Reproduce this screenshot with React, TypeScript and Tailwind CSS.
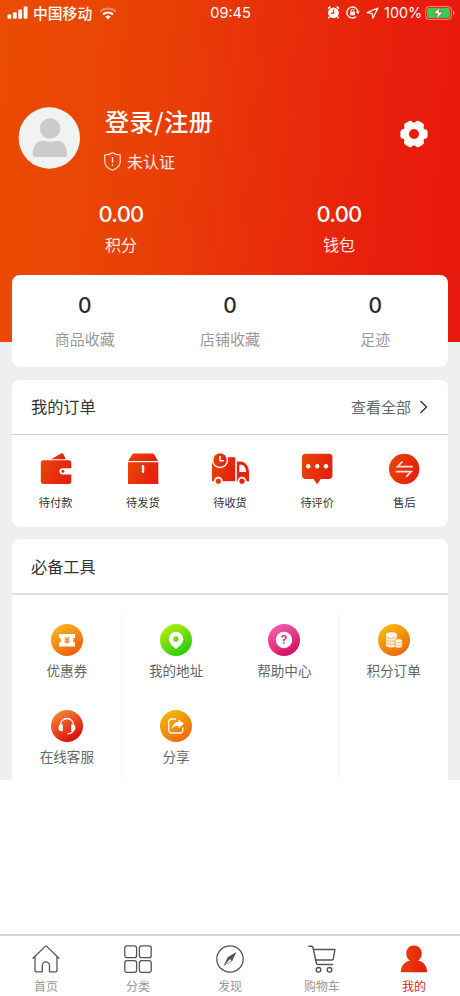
import React from "react";

type IconProps = { className?: string };

// shared fills for the drawn icons
function Gradients() {
  return (
    <svg className="absolute h-0 w-0" aria-hidden="true">
      <defs>
        <linearGradient id="red" x1="0" y1="0" x2="1" y2="0.3">
          <stop offset="0" stopColor="#ea4607" />
          <stop offset="1" stopColor="#e6200f" />
        </linearGradient>
      </defs>
    </svg>
  );
}

function StatusBar() {
  return (
    <div className="flex h-[25px] items-center justify-between pl-[7px] pr-[6px] text-white">
      <div className="flex w-[190px] items-center">
        <svg width="21" height="13" viewBox="0 0 21 13" fill="#fff">
          <rect x="0.5" y="8.5" width="3.8" height="4.2" rx="1" />
          <rect x="5.9" y="6.3" width="3.8" height="6.4" rx="1" />
          <rect x="11.3" y="3.6" width="3.8" height="9.1" rx="1" />
          <rect x="16.7" y="0.5" width="3.8" height="12.2" rx="1" />
        </svg>
        <span className="ml-[5px] font-['Noto_Sans_CJK_SC',sans-serif] text-[14.8px] leading-[24px] font-medium">中国移动</span>
        <svg className="ml-[7px] mt-px" width="18" height="13" viewBox="0 0 18 13" fill="none" stroke="#fff">
          <path d="M1.4 4.6a11 11 0 0 1 15.2 0" strokeWidth="2" opacity="0.35" />
          <path d="M4 7.5a7.2 7.2 0 0 1 10 0" strokeWidth="2.1" />
          <path d="M9 12.6 6.2 9.8a4 4 0 0 1 5.6 0Z" fill="#fff" stroke="none" />
        </svg>
      </div>
      <span className="font-['Inter',sans-serif] text-[14.5px] leading-[24px]">09:45</span>
      <div className="flex w-[190px] items-center justify-end">
        <svg width="13" height="13" viewBox="0 0 12 13">
          <path d="M0.4 2.6 3 .5M9 .5l2.6 2.1" stroke="#fff" strokeWidth="1.5" />
          <circle cx="6" cy="6.8" r="5.4" fill="#fff" />
          <path d="M2.2 10.5.9 12.3M9.8 10.5l1.3 1.8" stroke="#fff" strokeWidth="1.4" />
          <path d="M6.2 3.6v3.5H3.4" fill="none" stroke="#e8280c" strokeWidth="1.1" />
        </svg>
        <svg className="ml-[6px]" width="14" height="13" viewBox="0 0 14 13" fill="none" stroke="#fff">
          <path d="M11.9 6.2a5.5 5.5 0 1 0-1.7 4.3" strokeWidth="1.3" />
          <path d="m9.8 5.6 2.2 2.6 1.8-2.6Z" fill="#fff" stroke="none" />
          <rect x="4.1" y="5.7" width="4.8" height="3.6" rx="0.6" fill="#fff" stroke="none" />
          <path d="M5 6V4.9a1.5 1.5 0 0 1 3 0V6" strokeWidth="1" />
        </svg>
        <svg className="ml-[6px]" width="13" height="12" viewBox="0 0 13 12" fill="none" stroke="#fff" strokeWidth="1.2" strokeLinejoin="round">
          <path d="M12 1 1.2 5.6l5 .9.6 4.8Z" />
        </svg>
        <span className="ml-[5px] font-['Inter',sans-serif] text-[14.3px] leading-[24px]">100%</span>
        <svg className="-mr-px ml-[3px]" width="30" height="14" viewBox="0 0 30 14">
          <rect x="0.5" y="0.6" width="26" height="12.8" rx="3.6" fill="none" stroke="#fff" strokeOpacity="0.5" />
          <rect x="2" y="2.1" width="23" height="9.8" rx="2.2" fill="#35ce54" />
          <path d="M28 5v4c1-.3 1.5-1 1.5-2S29 5.3 28 5Z" fill="#fff" opacity="0.6" />
          <path d="M15.5.8 8.4 7.7h4.3L10.9 13.3l7.3-7.2h-4.4Z" fill="#fff" stroke="#e0301a" strokeWidth="0.7" />
        </svg>
      </div>
    </div>
  );
}

function Avatar() {
  return (
    <svg width="62" height="62" viewBox="0 0 62 62">
      <circle cx="31.3" cy="31" r="30.7" fill="#f1f3f3" />
      <circle cx="32" cy="21.5" r="10.3" fill="#cbcbcb" />
      <path d="M14.6 47.5C14.6 39 18.9 33.8 24.4 33.8c2.4 0 3.5 1 7.5 1s5.1-1 7.5-1c5.5 0 9.8 5.2 9.8 13.7 0 1.6-.9 2.5-2.4 2.5H17c-1.5 0-2.4-.9-2.4-2.5Z" fill="#cbcbcb" />
    </svg>
  );
}

function GearIcon() {
  return (
    <svg width="28" height="28" viewBox="0 0 28 28">
      <g fill="#fff">
        <circle cx="14" cy="14" r="11.4" />
        <rect x="0.4" y="9.2" width="27.2" height="9.6" rx="3" />
        <rect x="0.4" y="9.2" width="27.2" height="9.6" rx="3" transform="rotate(60 14 14)" />
        <rect x="0.4" y="9.2" width="27.2" height="9.6" rx="3" transform="rotate(120 14 14)" />
      </g>
      <circle cx="14" cy="14" r="5" fill="#e81f0c" />
    </svg>
  );
}

function Header() {
  return (
    <header className="h-[275px] font-['Noto_Sans_CJK_SC',sans-serif] text-white">
      <StatusBar />
      <div className="flex h-[173px] items-start pl-[18px] pr-[32px] pt-[79px]">
        <div className="pt-[3px]">
          <Avatar />
        </div>
        <div className="ml-[24px] flex-1">
          <div className="pl-px text-[24px] leading-[34px] font-medium tracking-[0.6px]">登录/注册</div>
          <div className="mt-[11px] flex items-center leading-[24px]">
            <svg width="17" height="19" viewBox="0 0 17 19" fill="none" stroke="#fff" strokeOpacity="0.9" strokeWidth="1.1" strokeLinejoin="round">
              <path d="M8.5.8C6.2 2.4 3.6 3 .8 3v6.5c0 4.2 3 7 7.7 8.8 4.7-1.8 7.7-4.6 7.7-8.8V3C13.4 3 10.8 2.4 8.5.8Z" />
              <path d="M8.5 5v5.5M8.5 12.2v1.6" strokeWidth="1.3" />
            </svg>
            <span className="ml-[6px] text-[16px] opacity-90">未认证</span>
          </div>
        </div>
        <div className="pt-[16px]">
          <GearIcon />
        </div>
      </div>
      <div className="flex pl-[12px] text-center">
        <div className="w-[218px]">
          <div className="font-['Inter',sans-serif] text-[22px] leading-[32px] font-medium tracking-[-0.8px]">0.00</div>
          <div className="mt-[2px] text-[16px] leading-[24px] opacity-90">积分</div>
        </div>
        <div className="w-[218px]">
          <div className="font-['Inter',sans-serif] text-[22px] leading-[32px] font-medium tracking-[-0.8px]">0.00</div>
          <div className="mt-[2px] text-[16px] leading-[24px] opacity-90">钱包</div>
        </div>
      </div>
    </header>
  );
}

function WalletIcon() {
  return (
    <svg width="32" height="32" viewBox="0 0 32 32" fill="url(#red)">
      <path d="M11 6.2 21 .6c1-.5 2-.2 2.5.7l2.3 4.9Z" />
      <path d="M3.500 7.300h25c1.700 0 2.800 1 2.800 2.800v5.100H22.500a3 3 0 0 0 0 6.200h8.800v6.800c0 1.800-1.100 2.800-2.800 2.800h-25C1.800 31 .8 30 .8 28.200V10.100c0-1.800 1-2.800 2.700-2.800Z" />
      <circle cx="22.8" cy="18.3" r="1.5" />
    </svg>
  );
}

function BoxIcon() {
  return (
    <svg width="32" height="32" viewBox="0 0 32 32" fill="url(#red)">
      <path d="M7 .6h18.4c.8 0 1.4.3 1.8 1L31 8H1l4.300-6.400c.4-.7 1-1 1.700-1Z" />
      <path d="M1 9.200h30.300V31H1Z" />
      <rect x="14.8" y="12" width="2.4" height="8" rx="1.2" fill="#fff" />
    </svg>
  );
}

function TruckIcon() {
  return (
    <svg width="38" height="32" viewBox="0 0 38 32">
      <path d="M1 4.2h23.2v24H1Z" fill="url(#red)" />
      <path d="M25.8 8.5h3.7C34.5 8.5 38 13.5 38 19.5v8.7H25.8Z" fill="#e7230f" />
      <path d="M28.3 11.8h1.9c2.8 0 4.7 3.3 4.9 7.2h-6.8Z" fill="#fff" />
      <circle cx="9" cy="7" r="8.2" fill="#fff" />
      <circle cx="9" cy="7" r="6.7" fill="url(#red)" />
      <path d="M9 3v4.8h3.8" fill="none" stroke="#fff" strokeWidth="1.5" />
      <circle cx="7.3" cy="28.2" r="4.4" fill="#fff" />
      <circle cx="7.3" cy="28.2" r="2.6" fill="#e83d09" />
      <circle cx="31" cy="28.2" r="4.4" fill="#fff" />
      <circle cx="31" cy="28.2" r="2.6" fill="#e7230f" />
    </svg>
  );
}

function CommentIcon() {
  return (
    <svg width="32" height="32" viewBox="0 0 32 32">
      <path d="M4.500.7h23.400c2.200 0 3.500 1.300 3.500 3.500v18.300c0 2.200-1.300 3.500-3.500 3.500h-8.100l-3.600 5.300-3.600-5.300H4.500C2.300 26 1 24.700 1 22.500V4.200C1 2 2.300.7 4.500.7Z" fill="url(#red)" />
      <g fill="#fff">
        <circle cx="7.3" cy="13.2" r="2.2" />
        <circle cx="16.2" cy="13.2" r="2.2" />
        <circle cx="25" cy="13.2" r="2.2" />
      </g>
    </svg>
  );
}

function RefundIcon() {
  return (
    <svg width="32" height="32" viewBox="0 0 32 32">
      <circle cx="16.2" cy="16" r="15.2" fill="url(#red)" />
      <path d="M24.8 13.7H9.500l5-5.200M7.800 18.700h15.400l-5 5.200" fill="none" stroke="#fff" strokeOpacity="0.85" strokeWidth="1.7" />
    </svg>
  );
}

const stats = [
  { value: 0, label: "商品收藏" },
  { value: 0, label: "店铺收藏" },
  { value: 0, label: "足迹" },
];

const orders = [
  { icon: <WalletIcon />, label: "待付款" },
  { icon: <BoxIcon />, label: "待发货" },
  { icon: <TruckIcon />, label: "待收货" },
  { icon: <CommentIcon />, label: "待评价" },
  { icon: <RefundIcon />, label: "售后" },
];

function Stats() {
  return (
    <section className="flex h-[92px] rounded-lg bg-white pt-[16px] text-center">
      {stats.map((item) => (
        <div key={item.label} className="flex-1">
          <div className="font-['Inter',sans-serif] text-[21px] leading-[30px] font-medium text-[#2b2b2b]">{item.value}</div>
          <div className="mt-[7px] text-[15px] leading-[22px] text-[#999]">{item.label}</div>
        </div>
      ))}
    </section>
  );
}

function Orders() {
  return (
    <section className="mt-[13px] h-[147px] rounded-lg bg-white">
      <div className="flex h-[55px] items-center justify-between border-b border-[#d2d2d2] pl-[19px] pr-[20px]">
        <h2 className="pb-[2px] text-[16.2px] leading-[24px] text-[#333]">我的订单</h2>
        <div className="flex items-center text-[15px] leading-[24px] text-[#666]">
          查看全部
          <svg className="ml-[8px]" width="9" height="14" viewBox="0 0 9 14" fill="none" stroke="#333" strokeWidth="1.4">
            <path d="m1.5 1 6 6-6 6" />
          </svg>
        </div>
      </div>
      <div className="flex pt-[18px]">
        {orders.map((item) => (
          <div key={item.label} className="flex flex-1 flex-col items-center">
            {item.icon}
            <span className="mt-[9px] text-[11.2px] leading-[16px] text-[#333]">{item.label}</span>
          </div>
        ))}
      </div>
    </section>
  );
}

const tools = [
  {
    label: "优惠券",
    from: "#fbb91c",
    to: "#f1560f",
    art: (
      <>
        <path d="M8 10h16v3.700a2.500 2.500 0 0 0 0 4.900v3.900H8v-3.900a2.500 2.500 0 0 0 0-4.900Z" fill="#fff" />
        <path d="m14 13 2 2.600 2-2.600M13.500 16h5M13.500 17.900h5M16 15.600v4.200" fill="none" stroke="#f4791a" strokeWidth="1.2" />
      </>
    ),
  },
  {
    label: "我的地址",
    from: "#b8ee10",
    to: "#1dcb0b",
    art: <path fillRule="evenodd" d="M16 7.800a7.300 7.300 0 0 1 7.300 7.200c0 4-4 7.300-7.300 10-3.300-2.700-7.300-6-7.300-10A7.300 7.300 0 0 1 16 7.800Zm0 4.500a2.700 2.700 0 1 0 0 5.400 2.700 2.700 0 0 0 0-5.400Z" fill="#fff" />,
  },
  {
    label: "帮助中心",
    from: "#fb62ae",
    to: "#ce0b5b",
    art: (
      <>
        <circle cx="16" cy="16" r="8.2" fill="#fff" />
        <text x="16" y="20.4" textAnchor="middle" className="font-['Inter',sans-serif] text-[12px] font-semibold" fill="#cc3177">?</text>
      </>
    ),
  },
  {
    label: "积分订单",
    from: "#f8bd0b",
    to: "#ea6208",
    art: (
      <>
        <path d="M8 10.500c0-3 11-3 11 0v10.800c0 3-11 3-11 0Z" fill="#fff4e3" />
        <path d="M8 12.800c1.500 2 9.500 2 11 0M8 15.800c1.500 2 9.500 2 11 0M8 18.800c1.500 2 9.500 2 11 0" fill="none" stroke="#f2a12c" strokeWidth="0.8" />
        <path d="M17 16.500c0-2.200 7.300-2.200 7.300 0v6c0 2-7.300 2-7.300 0Z" fill="#fff4e3" stroke="#ef8511" strokeWidth="0.7" />
        <path d="M17.300 18c1.300 1.300 5.400 1.300 6.700 0M17.300 20.500c1.300 1.300 5.400 1.300 6.700 0" fill="none" stroke="#f2a12c" strokeWidth="0.6" />
      </>
    ),
  },
  {
    label: "在线客服",
    from: "#f58a3c",
    to: "#d90303",
    art: (
      <>
        <path d="M9.500 15.500v-.7a6.500 6.300 0 0 1 13 0v.7" fill="none" stroke="#fff" strokeWidth="1.3" />
        <path d="M11.800 14.300v7H11a3.500 3.500 0 0 1 0-7ZM20.200 14.300v7h.8a3.500 3.500 0 0 0 0-7Z" fill="#fff" />
        <path d="M22.300 20.500c-.6 1.900-2.200 3-5.300 3.200" fill="none" stroke="#fff" strokeWidth="1.3" strokeLinecap="round" />
      </>
    ),
  },
  {
    label: "分享",
    from: "#efbd0b",
    to: "#f2620d",
    art: (
      <>
        <path d="M15.500 9h-4A2.700 2.700 0 0 0 8.800 11.700v8.600a2.700 2.700 0 0 0 2.700 2.700h8.600a2.700 2.700 0 0 0 2.700-2.700v-2.500" fill="none" stroke="#fff" strokeWidth="1.3" strokeLinecap="round" />
        <path d="M18.500 9.500v2.400c-4 .2-6.300 2.600-6.600 7.300 1.500-2.600 3.400-3.500 6.600-3.500v2.600l5.500-4.500Z" fill="#fff" />
      </>
    ),
  },
];

function Tools() {
  return (
    <section className="mt-[12px] h-[241px] overflow-hidden rounded-t-lg bg-white">
      <div className="flex h-[56px] items-center border-b-2 border-[#dedfdf] pl-[19px]">
        <h2 className="text-[16.2px] leading-[24px] text-[#333]">必备工具</h2>
      </div>
      <div className="mt-[17px] ml-px grid grid-cols-4">
        {tools.map((tool, i) => (
          <div
            key={tool.label}
            className={`flex h-[86px] flex-col items-center pt-[12px] ${i % 2 === 0 ? "border-r border-[#f5f5f5]" : ""}`}
          >
            <svg width="32" height="32" viewBox="0 0 32 32">
              <defs>
                <linearGradient id={`tool-${i}`} x1="0.2" y1="0" x2="0.8" y2="1">
                  <stop offset="0" stopColor={tool.from} />
                  <stop offset="1" stopColor={tool.to} />
                </linearGradient>
              </defs>
              <circle cx="16" cy="16" r="16" fill={`url(#tool-${i})`} />
              {tool.art}
            </svg>
            <span className="mt-[4px] text-[13.6px] leading-[20px] text-[#666]">{tool.label}</span>
          </div>
        ))}
        <div className="border-r border-[#f5f5f5]" />
      </div>
    </section>
  );
}

function HomeIcon({ className }: IconProps) {
  return (
    <svg className={className} width="28" height="28" viewBox="0 0 28 28" fill="none" stroke="#555" strokeWidth="1.3" strokeLinejoin="round" strokeLinecap="round">
      <path d="M1 13.200 13 1.600q1-.9 2 0L27 13.200" />
      <path d="M3 11.800V25.500q0 1.300 1.300 1.300h6v-6.300a3.600 3.600 0 0 1 7.200 0v6.300h6.200q1.300 0 1.300-1.300V11.800" />
    </svg>
  );
}

function CategoryIcon({ className }: IconProps) {
  return (
    <svg className={className} width="28" height="28" viewBox="0 0 28 28" fill="none" stroke="#555" strokeWidth="1.3">
      <rect x="0.8" y="0.9" width="11.8" height="11.8" rx="2.2" />
      <rect x="15.4" y="0.9" width="11.8" height="11.8" rx="2.2" />
      <rect x="0.8" y="15.6" width="11.8" height="11.8" rx="2.2" />
      <rect x="15.4" y="15.6" width="11.8" height="11.8" rx="2.2" />
    </svg>
  );
}

function CompassIcon({ className }: IconProps) {
  return (
    <svg className={className} width="28" height="28" viewBox="0 0 28 28" fill="none" stroke="#555" strokeWidth="1.3">
      <circle cx="14" cy="14" r="13.2" />
      <path d="M20.500 7 11.800 12 7.500 21 16.200 16Z" fill="#555" stroke="none" />
      <path d="m8.800 19.800 5.200-5.800 1.500 1.700Z" fill="#fff" stroke="none" />
    </svg>
  );
}

function CartIcon({ className }: IconProps) {
  return (
    <svg className={className} width="28" height="28" viewBox="0 0 28 28" fill="none" stroke="#555" strokeWidth="1.4" strokeLinejoin="round" strokeLinecap="round">
      <path d="M.8 1.200h2.500c1 0 1.500.4 1.700 1.300L8.300 18c.2 1 .8 1.500 1.800 1.500h14.500" />
      <path d="M5.700 4.500h21.200l-1.500 9.200c-.1.900-.6 1.300-1.500 1.300H7.800" />
      <circle cx="10.5" cy="24.8" r="2.3" />
      <circle cx="21.5" cy="24.8" r="2.3" />
    </svg>
  );
}

function UserIcon({ className }: IconProps) {
  return (
    <svg className={className} width="28" height="28" viewBox="0 0 28 28" fill="url(#red)">
      <path d="M14 .5c4.500 0 7.800 3.400 7.800 7.900 0 3.300-1.600 5.700-4 7.200 5.600 1.200 9 4.700 9.400 11.600H.8c.4-6.900 3.800-10.400 9.400-11.600-2.400-1.500-4-3.900-4-7.200C6.200 3.900 9.500.5 14 .5Z" />
    </svg>
  );
}

const tabs = [
  { icon: HomeIcon, label: "首页" },
  { icon: CategoryIcon, label: "分类" },
  { icon: CompassIcon, label: "发现" },
  { icon: CartIcon, label: "购物车" },
  { icon: UserIcon, label: "我的", active: true },
];

function TabBar() {
  return (
    <nav className="flex h-[62px] border-t-2 border-[#d5d5d5] bg-white">
      {tabs.map(({ icon: Icon, label, active }) => (
        <div key={label} className="flex flex-1 flex-col items-center pt-[9px]">
          <Icon />
          <span className={`mt-[5px] text-[12px] leading-[16px] ${active ? "text-[#d8262c]" : "text-[#999]"}`}>{label}</span>
        </div>
      ))}
    </nav>
  );
}

function App() {
  return (
    <div className="flex h-[996px] w-[460px] flex-col overflow-hidden bg-white font-['Noto_Sans_CJK_SC',sans-serif]">
      <Gradients />
      <div className="h-[780px] bg-[#eeeff1] bg-[linear-gradient(95deg,#ea4c03_0%,#e94304_28%,#e8300a_56%,#e81d0c_84%,#e7180c_100%)] bg-[length:460px_342px] bg-no-repeat">
        <Header />
        <main className="px-[12px]">
          <Stats />
          <Orders />
          <Tools />
        </main>
      </div>
      <div className="flex-1" />
      <TabBar />
    </div>
  );
}

export default App;
